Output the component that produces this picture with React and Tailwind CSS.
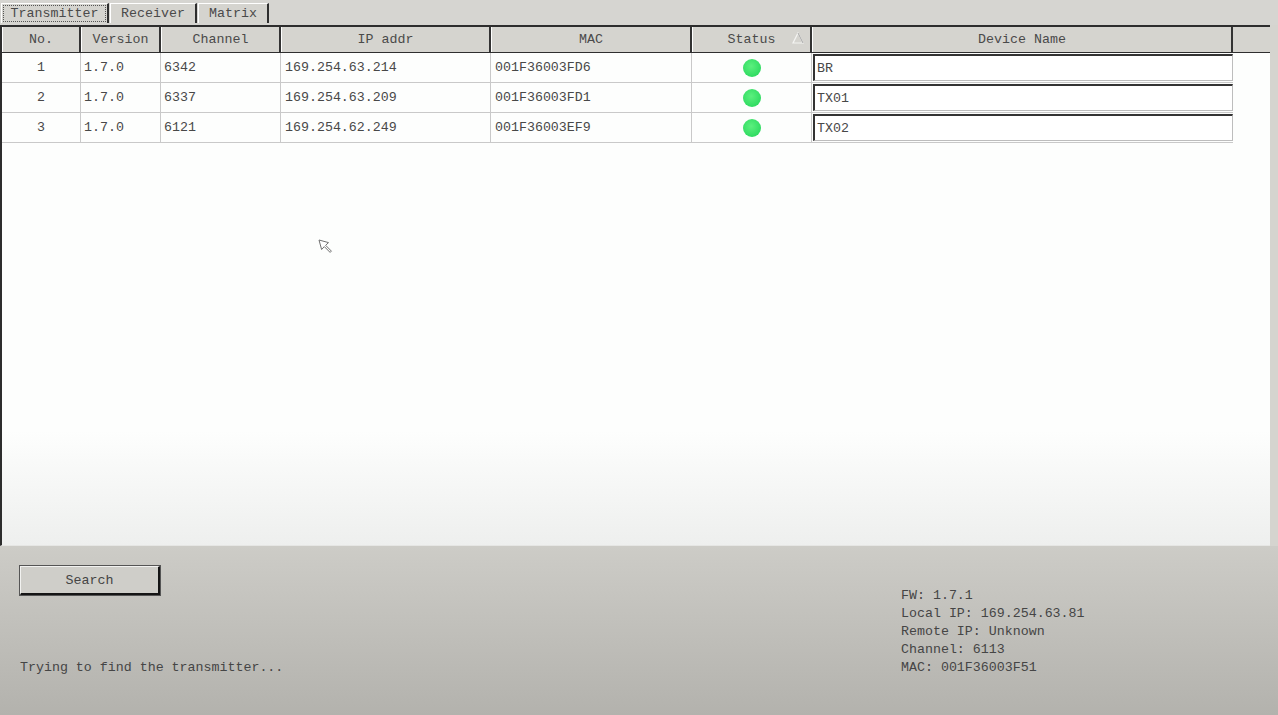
const COLS = [
  { key: 'no', label: 'No.', w: 'w-[79px]', align: 'justify-center' },
  { key: 'version', label: 'Version', w: 'w-[80px]', align: 'justify-start pl-[3px]' },
  { key: 'channel', label: 'Channel', w: 'w-[120px]', align: 'justify-start pl-[3px]' },
  { key: 'ip', label: 'IP addr', w: 'w-[210px]', align: 'justify-start pl-[4px]' },
  { key: 'mac', label: 'MAC', w: 'w-[201px]', align: 'justify-start pl-[4px]' },
  { key: 'status', label: 'Status', w: 'w-[120px]', align: 'justify-center' },
  { key: 'name', label: 'Device Name', w: 'w-[421px]', align: 'justify-start' },
];

const ROWS = [
  { no: 1, version: '1.7.0', channel: '6342', ip: '169.254.63.214', mac: '001F36003FD6', name: 'BR' },
  { no: 2, version: '1.7.0', channel: '6337', ip: '169.254.63.209', mac: '001F36003FD1', name: 'TX01' },
  { no: 3, version: '1.7.0', channel: '6121', ip: '169.254.62.249', mac: '001F36003EF9', name: 'TX02' },
];

function Tab({ label, active, w }) {
  return (
    <div className={`${w} h-[20px] flex items-stretch border-l border-t border-white border-r-2 border-r-[#2f2f2f] bg-[#d5d4cf]`}>
      <div
        className={`flex-1 flex items-center justify-center ${active ? 'border border-dotted border-[#555] m-[1px]' : ''}`}
      >
        {label}
      </div>
    </div>
  );
}

function Cell({ col, row }) {
  if (col.key === 'status') {
    return (
      <div className={`${col.w} h-full flex items-center justify-center border-r border-[#c9c9c9]`}>
        <div className="w-[18px] h-[18px] rounded-full bg-[radial-gradient(circle_at_45%_40%,#5cf07e,#1fd356)]" />
      </div>
    );
  }
  if (col.key === 'name') {
    return (
      <div className={`${col.w} h-full py-[1px] pl-[1px]`}>
        <div className="h-full bg-white border-t-2 border-l-2 border-[#333] border-r border-b border-r-[#bdbdbd] border-b-[#bdbdbd] flex items-center pl-[2px] pt-[1px]">
          {row.name}
        </div>
      </div>
    );
  }
  return (
    <div className={`${col.w} h-full flex items-center pt-[1px] ${col.align} border-r border-[#c9c9c9]`}>
      {row[col.key]}
    </div>
  );
}

export default function App() {
  return (
    <div className="w-[1278px] h-[715px] flex flex-col bg-[#d5d4cf] text-[#4a4a4a] text-[13.3px] font-['Liberation_Mono',monospace] overflow-hidden">
      {/* tab strip */}
      <div className="h-[25px] flex items-end pl-[1px] pb-[2px] gap-[1px] bg-[#d6d5d1]">
        <Tab label="Transmitter" active w="w-[108px]" />
        <Tab label="Receiver" w="w-[87px]" />
        <Tab label="Matrix" w="w-[71px]" />
      </div>

      {/* table panel */}
      <div className="h-[521px] mr-[8px] flex flex-col border-t-2 border-l-2 border-[#2d2d2d] border-b border-b-[#e6e6e4] bg-[linear-gradient(to_bottom,#fdfefd_0%,#fdfefd_78%,#eeefee_100%)] relative">
        {/* header */}
        <div className="h-[26px] flex bg-[#d5d4cf] shrink-0 border-b border-[#2f2f2f]">
          {COLS.map((c) => (
            <div
              key={c.key}
              className={`${c.w} h-full flex items-center justify-center pt-[1px] relative border-l border-white border-r-2 border-r-[#333]`}
            >
              {c.label}
              {c.key === 'status' && (
                <svg className="absolute right-[6px] top-[5px]" width="12" height="12" viewBox="0 0 12 12">
                  <path d="M6 1 L11 11 L1 11 Z" fill="none" stroke="#f4f4f2" strokeWidth="1.2" />
                  <path d="M6 1 L11 11" fill="none" stroke="#a5a5a5" strokeWidth="1" />
                </svg>
              )}
            </div>
          ))}
          <div className="flex-1" />
        </div>

        {/* rows */}
        {ROWS.map((r) => (
          <div key={r.no} className="h-[30px] w-[1231px] flex border-b border-[#c9c9c9] text-[#484848]">
            {COLS.map((c) => (
              <Cell key={c.key} col={c} row={r} />
            ))}
          </div>
        ))}

        {/* mouse pointer */}
        <svg className="absolute left-[316px] top-[212px]" width="16" height="16" viewBox="0 0 16 16">
          <path
            d="M1 1 L10.5 3.6 L7.6 6.3 L13.4 12.1 L12.1 13.4 L6.3 7.6 L3.6 10.5 Z"
            fill="#fff"
            stroke="#707070"
            strokeWidth="1"
            strokeLinejoin="round"
          />
        </svg>
      </div>

      {/* bottom panel */}
      <div className="flex-1 flex bg-[linear-gradient(to_bottom,#cdccc7,#b3b2ad)] text-[#454545]">
        <div className="w-[880px] pl-[20px] pt-[20px] flex flex-col">
          <div className="w-[140px] h-[29px] flex items-center justify-center pt-[2px] bg-[#cfcec9] border-l border-t border-[#f2f2f0] border-r-2 border-b-2 border-r-[#151515] border-b-[#151515] outline outline-1 outline-[#555]">
            Search
          </div>
          <div className="mt-[63px]">Trying to find the transmitter...</div>
        </div>
        <div className="pl-[21px] pt-[41px] leading-[18px] flex flex-col">
          <div>FW: 1.7.1</div>
          <div>Local IP: 169.254.63.81</div>
          <div>Remote IP: Unknown</div>
          <div>Channel: 6113</div>
          <div>MAC: 001F36003F51</div>
        </div>
      </div>
    </div>
  );
}
